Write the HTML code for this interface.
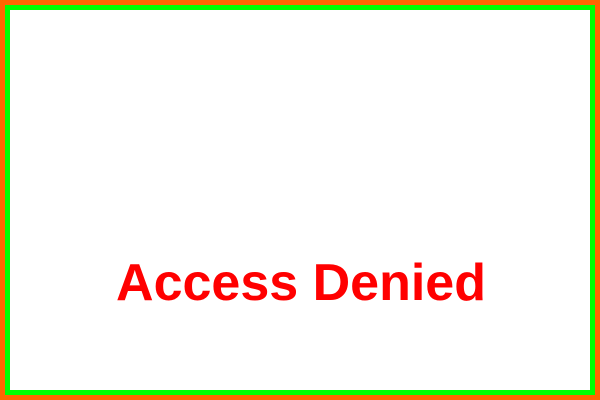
<!DOCTYPE html>
<html><head><style>
html,body{margin:0;padding:0;width:600px;height:400px;background:#ff6600;overflow:hidden}
.box{position:absolute;left:5px;top:5px;width:580px;height:380px;border:5px solid #00ff00;background:#fff}
.t{position:absolute;left:1px;width:600px;top:253px;text-align:center;font:bold 52px "Liberation Sans",sans-serif;color:#ff0000;line-height:60px}
</style></head><body>
<div class="box"></div>
<div class="t">Access Denied</div>
</body></html>
